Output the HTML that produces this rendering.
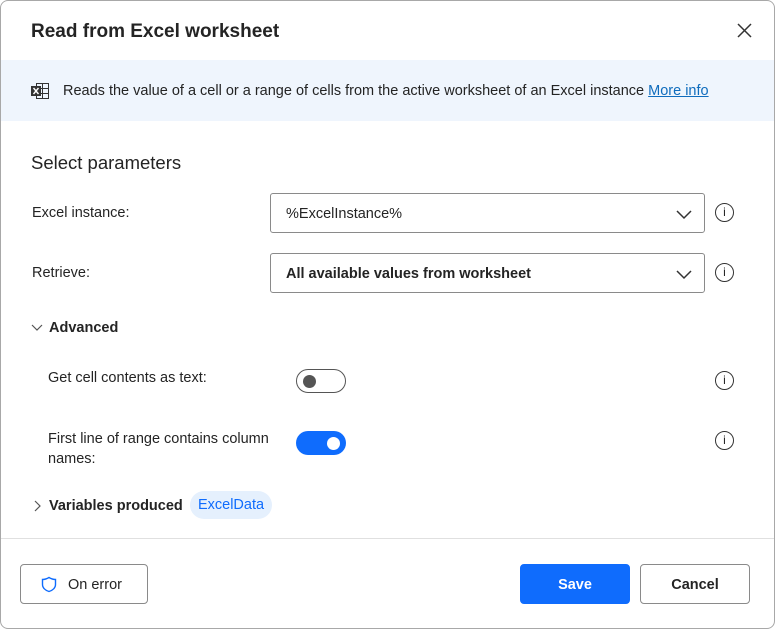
<!DOCTYPE html>
<html><head><style>
*{box-sizing:border-box;margin:0;padding:0}
body{width:775px;height:629px;background:#fff;font-family:"Liberation Sans",sans-serif;color:#242424;position:relative;overflow:hidden}
.frame{position:absolute;left:0;top:0;width:775px;height:629px;border:1px solid #a8a8a8;border-radius:8px}
.abs{position:absolute}
.title{left:31px;top:21px;font-size:19px;font-weight:bold;color:#242424}
.band{left:1px;top:60px;width:773px;height:61px;background:#eff5fd}
.desc{left:63px;top:83px;font-size:14.5px;color:#242424}
.desc a{color:#0f6cbd;text-decoration:underline}
.h2{left:31px;top:152px;font-size:18.5px;color:#242424}
.lbl{font-size:14.5px;color:#242424}
.sel{border:1px solid #8a8a8a;border-radius:3px;height:40px;left:270px;width:435px;font-size:14.5px;padding:12px 15px}
.chev{position:absolute;right:12px;top:12px}
.info{width:19px;height:19px;border:1.5px solid #333;border-radius:50%;font-size:12px;text-align:center;line-height:16px}
.tog{width:50px;height:24px;border-radius:12px}
.btn{height:40px;border:1px solid #8a8a8a;border-radius:4px;font-size:14.5px;font-weight:bold;text-align:center;line-height:40px}
</style></head><body>
<div class="frame"></div>
<div class="abs title">Read from Excel worksheet</div>
<svg class="abs" style="left:737px;top:23px" width="15" height="15" viewBox="0 0 15 15"><path d="M1 1L14 14M14 1L1 14" stroke="#333" stroke-width="1.5"/></svg>
<div class="abs band"></div>
<svg class="abs" style="left:30px;top:82px" width="20" height="18" viewBox="0 0 20 18"><rect x="6.5" y="1.5" width="12" height="15" fill="none" stroke="#333"/><path d="M6.5 6.5H18.5M6.5 11.5H18.5M12.5 1.5V16.5" stroke="#333"/><rect x="1" y="4" width="10" height="10" fill="#333"/><path d="M3.5 6L8.5 12M8.5 6L3.5 12" stroke="#fff" stroke-width="1.4"/></svg>
<div class="abs desc">Reads the value of a cell or a range of cells from the active worksheet of an Excel instance <a>More info</a></div>
<div class="abs h2">Select parameters</div>
<div class="abs lbl" style="left:32px;top:205px">Excel instance:</div>
<div class="abs sel" style="top:193px">%ExcelInstance%<svg class="chev" width="16" height="16" viewBox="0 0 16 16"><path d="M1 5L8 12L15 5" fill="none" stroke="#333" stroke-width="1.5"/></svg></div>
<div class="abs info" style="left:715px;top:203px">i</div>
<div class="abs lbl" style="left:32px;top:265px">Retrieve:</div>
<div class="abs sel" style="top:253px;font-weight:bold">All available values from worksheet<svg class="chev" width="16" height="16" viewBox="0 0 16 16"><path d="M1 5L8 12L15 5" fill="none" stroke="#333" stroke-width="1.5"/></svg></div>
<div class="abs info" style="left:715px;top:263px">i</div>
<svg class="abs" style="left:31px;top:323px" width="12" height="10" viewBox="0 0 12 10"><path d="M1 2L6 7L11 2" fill="none" stroke="#555" stroke-width="1.2"/></svg>
<div class="abs lbl" style="left:49px;top:320px;font-weight:bold">Advanced</div>
<div class="abs lbl" style="left:48px;top:370px">Get cell contents as text:</div>
<div class="abs tog" style="left:296px;top:369px;border:1px solid #555"><div class="abs" style="left:6px;top:5px;width:13px;height:13px;border-radius:50%;background:#555"></div></div>
<div class="abs info" style="left:715px;top:371px">i</div>
<div class="abs lbl" style="left:48px;top:429px;line-height:20px">First line of range contains column<br>names:</div>
<div class="abs tog" style="left:296px;top:431px;background:#0f6cfd"><div class="abs" style="left:31px;top:6px;width:13px;height:13px;border-radius:50%;background:#fff"></div></div>
<div class="abs info" style="left:715px;top:431px">i</div>
<svg class="abs" style="left:33px;top:500px" width="8" height="12" viewBox="0 0 8 12"><path d="M2 1L7 6L2 11" fill="none" stroke="#555" stroke-width="1.2"/></svg>
<div class="abs lbl" style="left:49px;top:498px;font-weight:bold">Variables produced</div>
<div class="abs" style="left:190px;top:491px;width:82px;height:28px;border-radius:14px;background:#e5f0fd;color:#0f6cfd;font-size:14.5px;text-align:center;line-height:29px">ExcelData</div>
<div class="abs" style="left:1px;top:538px;width:773px;height:1px;background:#e0e0e0"></div>
<div class="abs btn" style="left:20px;top:564px;width:128px;font-weight:normal;padding-left:22px">On error</div>
<svg class="abs" style="left:41px;top:576px" width="16" height="17" viewBox="0 0 16 17"><path d="M8 1.5C5.5 3 3.5 3.5 1.5 3.5V8.5C1.5 12 4.5 14.5 8 15.5C11.5 14.5 14.5 12 14.5 8.5V3.5C12.5 3.5 10.5 3 8 1.5Z" fill="none" stroke="#0f6cfd" stroke-width="1.4"/></svg>
<div class="abs btn" style="left:520px;top:564px;width:110px;background:#0f6cfd;border-color:#0f6cfd;color:#fff">Save</div>
<div class="abs btn" style="left:640px;top:564px;width:110px">Cancel</div>
</body></html>
